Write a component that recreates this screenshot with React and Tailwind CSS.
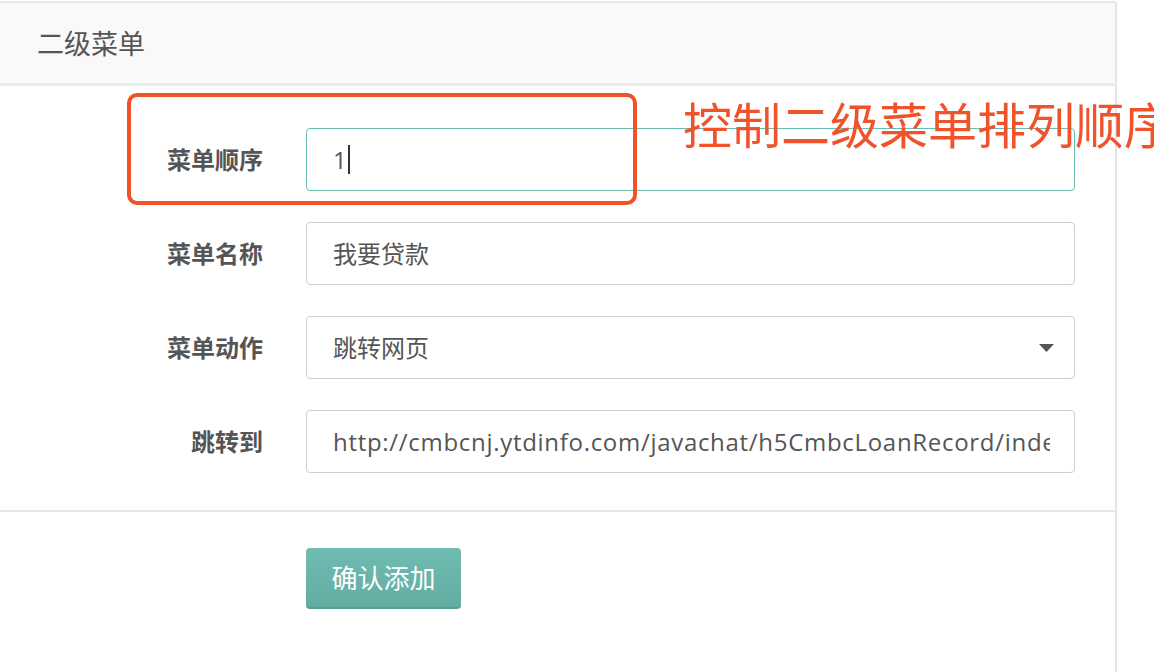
import React from "react";

const font = "font-['Open_Sans','Noto_Sans_CJK_SC',sans-serif]";

function Row({ label, children }) {
  return (
    <div className="flex items-center h-[63px]">
      <div className="w-[263px] text-right text-[24px] font-bold text-[#555] leading-none">
        {label}
      </div>
      <div className="ml-[43px] w-[769px] h-full">{children}</div>
    </div>
  );
}

export default function App() {
  return (
    <div className={`relative w-[1154px] h-[672px] bg-white overflow-hidden ${font}`}>
      <div className="mt-px w-[1117px] border-t-2 border-r-2 border-[#e6e6e6] rounded-tr-[3px] h-[671px]">
        <div className="h-[80px] bg-[#f9f9f9] border-b-[3px] border-[#ececec] flex items-center pl-[37px] box-content">
          <span className="text-[27px] text-[#555] leading-none">二级菜单</span>
        </div>
        <div className="pt-[42px] flex flex-col gap-[31px]">
          <Row label="菜单顺序">
            <div className="h-full border border-[#6bbcb1] rounded-[4px] flex items-center pl-[26px] text-[24px] text-[#555]">
              <span>1</span>
              <span className="ml-px w-[2px] h-[29px] bg-[#333]" />
            </div>
          </Row>
          <Row label="菜单名称">
            <div className="h-full border border-[#cfcfcf] rounded-[4px] flex items-center pl-[26px] text-[24px] text-[#555]">
              我要贷款
            </div>
          </Row>
          <Row label="菜单动作">
            <div className="h-full border border-[#cfcfcf] rounded-[4px] flex items-center justify-between pl-[26px] pr-[20px] text-[24px] text-[#555]">
              <span>跳转网页</span>
              <svg width="15" height="8" viewBox="0 0 15 8">
                <path d="M0 0 H15 L7.5 8 Z" fill="#555" />
              </svg>
            </div>
          </Row>
          <Row label="跳转到">
            <div className="h-full border border-[#cfcfcf] rounded-[4px] flex items-center pl-[26px] pr-[24px] text-[24px] text-[#555] overflow-hidden whitespace-nowrap">
              <span className="overflow-hidden block tracking-[0.7px]">http://cmbcnj.ytdinfo.com/javachat/h5CmbcLoanRecord/index.html</span>
            </div>
          </Row>
        </div>
        <div className="mt-[37px] h-[2px] bg-[#e6e6e6]" />
        <div className="pt-[36px] pl-[306px]">
          <button className="w-[155px] h-[61px] rounded-[4px] bg-gradient-to-b from-[#70bcb2] to-[#63aca2] border-b-2 border-[#5a9e95] text-white text-[26px] leading-none flex items-center justify-center">
            确认添加
          </button>
        </div>
      </div>
      <div className="absolute left-[127px] top-[93px] w-[510px] h-[112px] border-[4px] border-[#f0522a] rounded-[10px]" />
      <div className="absolute left-[683px] top-[95px] text-[49px] leading-[56px] text-[#f0522a] whitespace-nowrap font-['Noto_Sans_CJK_SC',sans-serif] font-normal">
        控制二级菜单排列顺序
      </div>
    </div>
  );
}
